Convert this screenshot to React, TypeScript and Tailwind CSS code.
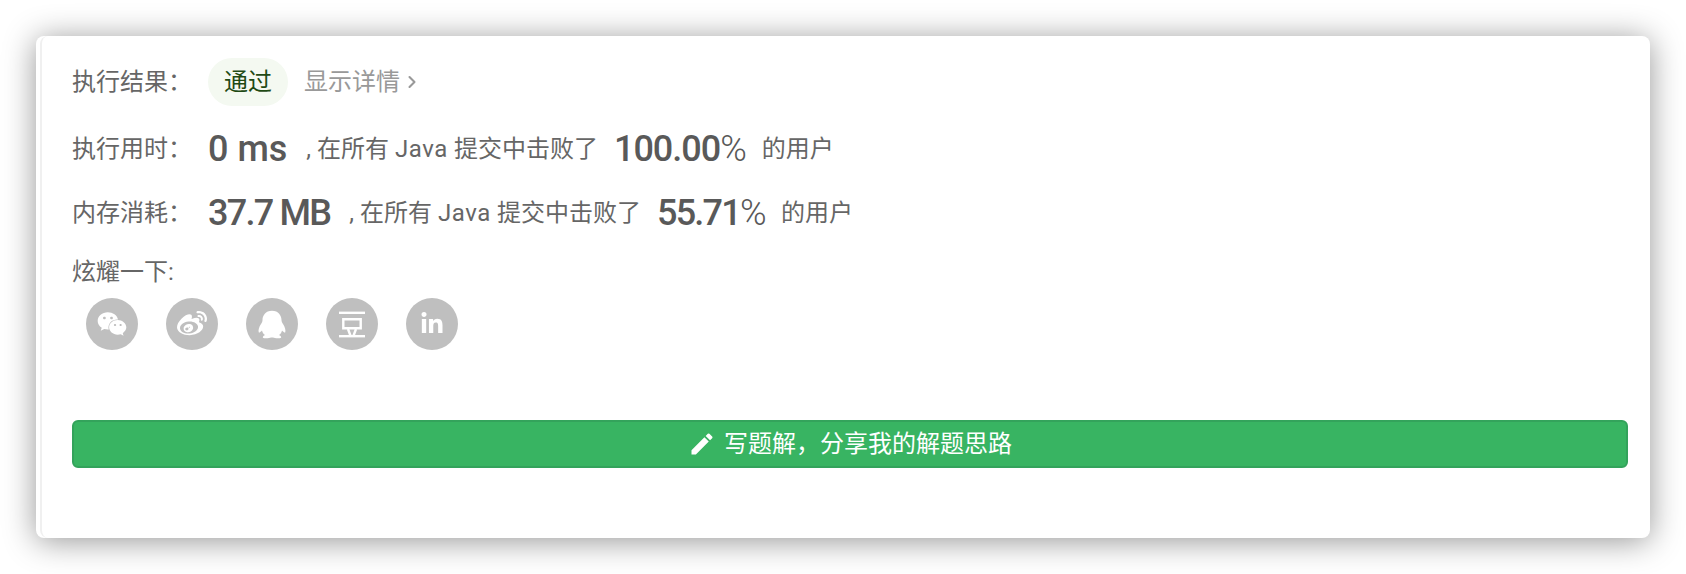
import React from 'react';
import { FaWeixin, FaWeibo, FaLinkedinIn } from 'react-icons/fa';
import { MdEdit } from 'react-icons/md';
import { ChevronRight } from 'lucide-react';

const cjk = "font-['Roboto','Noto_Sans_CJK_SC',sans-serif]";

const QqIcon: React.FC = () => (
  <svg viewBox="0 0 52 52" className="h-[52px] w-[52px]" fill="currentColor">
    <path d="M26 12.7C19.5 12.7 16.5 17.5 16.5 22C16.5 23.5 16 24.5 15 26C13 29 12 32.5 12.8 34.5C13.5 35 15 33.5 16 32.5C16.5 34.5 17.5 36 19 37C17 37.8 16.5 39 17 39.8C18 40.5 23 40.6 25 39.6C25.6 39.4 26.4 39.4 27 39.6C29 40.6 34 40.5 35 39.8C35.5 39 35 37.8 33 37C34.5 36 35.5 34.5 36 32.5C37 33.5 38.5 35 39.2 34.5C40 32.5 39 29 37 26C36 24.5 35.5 23.5 35.5 22C35.5 17.5 32.5 12.7 26 12.7Z" />
  </svg>
);

const DoubanIcon: React.FC = () => (
  <svg viewBox="0 0 52 52" className="h-[52px] w-[52px]" fill="none" stroke="currentColor" strokeWidth="2.4">
    <path d="M13 14.8h26" />
    <path d="M17.3 21.3h17.4v9H17.3z" />
    <path d="M22 31l2.4 6.5M30 31l-2.4 6.5" />
    <path d="M13 38.2h26" />
  </svg>
);

const StatRow: React.FC<{
  label: string;
  value: string;
  percent: string;
  className: string;
  valueClassName: string;
  percentClassName: string;
}> = ({ label, value, percent, className, valueClassName, percentClassName }) => (
  <div className={`flex items-center h-[40px] ${className}`}>
    <span className="w-[136px] shrink-0">{label}</span>
    <span className={`text-[36px] font-medium text-[#595959] ${valueClassName}`}>{value}</span>
    <span className="ml-[19px]">
      , 在所有 <span className="tracking-[0.6px]">Java</span> 提交中击败了
    </span>
    <span className={`ml-4 text-[36px] font-medium text-[#595959] ${percentClassName}`}>
      {percent}
      <span className="font-light">%</span>
    </span>
    <span className="ml-4">的用户</span>
  </div>
);

const App: React.FC = () => {
  return (
    <div className={`h-[574px] w-[1686px] bg-white pt-[36px] pl-[36px] ${cjk}`}>
      <div className="h-[502px] w-[1614px] rounded-lg bg-white pl-1 shadow-[0_3px_32px_rgba(0,0,0,0.42)]">
        <div className="h-full rounded-l-lg border-l-2 border-[#f0f0f0] pt-[22px] pl-[30px] pr-[22px] text-[24px] text-[#666666]">
          <div className="flex items-center h-[48px]">
            <span className="w-[136px] shrink-0">执行结果：</span>
            <span className="flex h-[48px] w-[80px] items-center justify-center rounded-full bg-[#f4f9f1] text-[#1f4a14]">
              通过
            </span>
            <span className="ml-4 flex items-center text-[#999999]">
              显示详情
              <ChevronRight className="ml-0.5 h-5 w-5" strokeWidth={2.5} />
            </span>
          </div>
          <StatRow
            label="执行用时："
            value="0 ms"
            percent="100.00"
            className="mt-[23px]"
            valueClassName=""
            percentClassName="tracking-[-1px]"
          />
          <StatRow
            label="内存消耗："
            value="37.7 MB"
            percent="55.71"
            className="mt-[24px]"
            valueClassName="tracking-[-1.75px]"
            percentClassName="tracking-[-1.75px]"
          />
          <div className="mt-[23px] leading-[32px]">炫耀一下:</div>
          <div className="mt-[10px] ml-[14px] flex gap-[28px]">
            <span className="flex h-[52px] w-[52px] items-center justify-center rounded-full bg-[#bfbfbf] text-white">
              <FaWeixin className="h-[30px] w-[30px]" />
            </span>
            <span className="flex h-[52px] w-[52px] items-center justify-center rounded-full bg-[#bfbfbf] text-white">
              <FaWeibo className="h-[30px] w-[30px]" />
            </span>
            <span className="flex h-[52px] w-[52px] items-center justify-center rounded-full bg-[#bfbfbf] text-white">
              <QqIcon />
            </span>
            <span className="flex h-[52px] w-[52px] items-center justify-center rounded-full bg-[#bfbfbf] text-white">
              <DoubanIcon />
            </span>
            <span className="flex h-[52px] w-[52px] items-center justify-center rounded-full bg-[#bfbfbf] text-white">
              <FaLinkedinIn className="h-[24px] w-[24px]" />
            </span>
          </div>
          <button className="mt-[70px] flex h-[48px] w-full items-center justify-center rounded-md border-2 border-[#33a35b] bg-[#38b462] text-white">
            <MdEdit className="mr-[8px] h-[28px] w-[28px]" />
            写题解，分享我的解题思路
          </button>
        </div>
      </div>
    </div>
  );
};

export default App;
